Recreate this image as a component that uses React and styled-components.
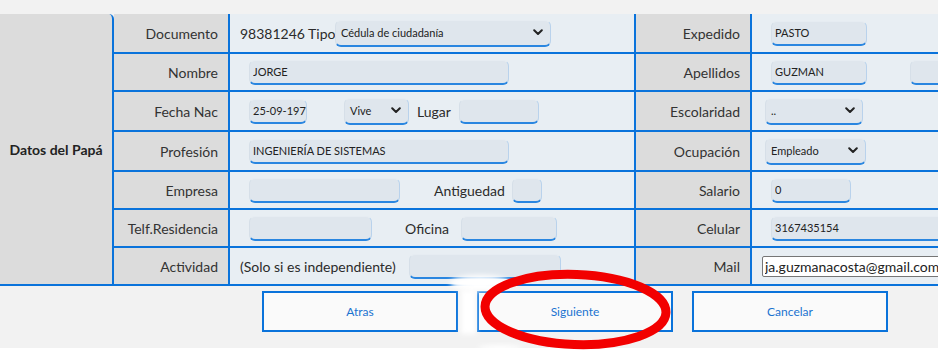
import React from 'react';
import styled, { createGlobalStyle } from 'styled-components';

const BLUE = '#0a73db';

const Global = createGlobalStyle`
  html, body { margin: 0; padding: 0; background: #fff; }
  body { font-family: Lato, "Open Sans", "DejaVu Sans", sans-serif; }
  * { box-sizing: border-box; }
`;

const Page = styled.div`
  position: relative;
  width: 938px;
  height: 360px;
  overflow: hidden;
  background: #fff;
`;

const TopBand = styled.div`
  height: 14px;
  background: #f2f2f2;
`;

const Table = styled.div`
  display: grid;
  grid-template-columns: 114px 116px 406px 116px 1fr;
  grid-template-rows: 40px 38px 40px 40px 38px 38px 38px;
  background: #f2f2f2;
`;

const Cell = styled.div`
  border-bottom: 2px solid ${BLUE};
  border-right: ${(p) => (p.$last ? 'none' : `2px solid ${BLUE}`)};
  display: flex;
  align-items: center;
  overflow: hidden;
  white-space: nowrap;
`;

const Section = styled(Cell)`
  grid-column: 1;
  grid-row: 1 / span 7;
  background: #dcdcdc;
  justify-content: center;
  font-weight: 700;
  font-size: 14px;
  color: #222;
  border-top-right-radius: 5px;
`;

const Label = styled(Cell)`
  background: #dcdcdc;
  justify-content: flex-end;
  padding-right: 10px;
  font-size: 14px;
  color: #333;
`;

const Value = styled(Cell)`
  background: #e8eef3;
  padding-left: ${(p) => p.$pad || 0}px;
`;

const Text = styled.span`
  display: inline-block;
  flex: none;
  width: ${(p) => (p.$w ? `${p.$w}px` : 'auto')};
  margin-left: ${(p) => p.$ml || 0}px;
  font-size: 14px;
  color: #2b2b2b;
`;

const Field = styled.input`
  flex: none;
  width: ${(p) => p.$w}px;
  height: ${(p) => p.$h || 25}px;
  margin-left: ${(p) => p.$ml || 0}px;
  padding: 0 0 0 3px;
  border: none;
  border-top: 1px solid #e6ecf2;
  border-left: 1px solid #d6dfe8;
  border-right: 1px solid #b9d2ec;
  border-bottom: 2px solid #2a86e0;
  border-radius: 6px;
  background: #dfe6ed;
  font-family: Lato, "Open Sans", sans-serif;
  font-size: 11px;
  color: #222;
  outline: none;
`;

const MailField = styled.input`
  flex: none;
  width: 200px;
  height: 21px;
  margin-left: ${(p) => p.$ml || 0}px;
  padding: 0 0 0 2px;
  border: 1px solid #767676;
  border-radius: 2px;
  background: #fff;
  font-family: Lato, "Open Sans", sans-serif;
  font-size: 14px;
  color: #222;
  outline: none;
`;

const SelectBox = styled.div`
  flex: none;
  display: flex;
  align-items: center;
  justify-content: space-between;
  width: ${(p) => p.$w}px;
  height: 27px;
  margin-left: ${(p) => p.$ml || 0}px;
  padding: 0 7px 0 5px;
  border-top: 1px solid #e6ecf2;
  border-left: 1px solid #d6dfe8;
  border-right: 1px solid #b9d2ec;
  border-bottom: 2px solid #2a86e0;
  border-radius: 6px;
  background: #dfe6ed;
  font-size: 11px;
  color: #222;
`;

const Chevron = () => (
  <svg width="10" height="7" viewBox="0 0 10 7">
    <polyline points="1.2,1.2 5,5 8.8,1.2" fill="none" stroke="#222" strokeWidth="2" strokeLinecap="round" strokeLinejoin="round" />
  </svg>
);

const Select = ({ w, ml, children }) => (
  <SelectBox $w={w} $ml={ml}>
    <span>{children}</span>
    <Chevron />
  </SelectBox>
);

const Footer = styled.div`
  height: 62px;
  background: #f2f2f2;
  display: flex;
  padding: 5px 0 0 262px;
  gap: 19px;
`;

const Button = styled.button`
  width: 196px;
  height: 41px;
  border: 2px solid ${BLUE};
  background: #fafafa;
  color: #1a73d0;
  font-family: Lato, "Open Sans", sans-serif;
  font-size: 12px;
  padding: 0;
`;

const Overlay = styled.svg`
  position: absolute;
  left: 0;
  top: 0;
  pointer-events: none;
`;

export default function App() {
  return (
    <Page>
      <Global />
      <TopBand />
      <Table>
        <Section>Datos del Papá</Section>

        <Label>Documento</Label>
        <Value $pad={10}>
          <Text $w={95}>98381246 Tipo</Text>
          <Select w={216}>Cédula de ciudadanía</Select>
        </Value>
        <Label>Expedido</Label>
        <Value $last $pad={19}>
          <Field $w={96} readOnly value="PASTO" />
        </Value>

        <Label>Nombre</Label>
        <Value $pad={19}>
          <Field $w={260} readOnly value="JORGE" />
        </Value>
        <Label>Apellidos</Label>
        <Value $last $pad={19}>
          <Field $w={96} readOnly value="GUZMAN" />
          <Field $w={60} $ml={43} readOnly value="" />
        </Value>

        <Label>Fecha Nac</Label>
        <Value $pad={19}>
          <Field $w={58} readOnly value="25-09-197" />
          <Select w={65} ml={37}>Vive</Select>
          <Text $w={42} $ml={8}>Lugar</Text>
          <Field $w={80} readOnly value="" />
        </Value>
        <Label>Escolaridad</Label>
        <Value $last $pad={13}>
          <Select w={98}>..</Select>
        </Value>

        <Label>Profesión</Label>
        <Value $pad={19}>
          <Field $w={260} readOnly value="INGENIERÍA DE SISTEMAS" />
        </Value>
        <Label>Ocupación</Label>
        <Value $last $pad={13}>
          <Select w={101}>Empleado</Select>
        </Value>

        <Label>Empresa</Label>
        <Value $pad={19}>
          <Field $w={151} readOnly value="" />
          <Text $w={78} $ml={34}>Antiguedad</Text>
          <Field $w={30} readOnly value="" />
        </Value>
        <Label>Salario</Label>
        <Value $last $pad={19}>
          <Field $w={80} readOnly value="0" />
        </Value>

        <Label>Telf.Residencia</Label>
        <Value $pad={19}>
          <Field $w={123} readOnly value="" />
          <Text $w={56} $ml={33}>Oficina</Text>
          <Field $w={96} readOnly value="" />
        </Value>
        <Label>Celular</Label>
        <Value $last $pad={19}>
          <Field $w={200} readOnly value="3167435154" />
        </Value>

        <Label>Actividad</Label>
        <Value $pad={10}>
          <Text $w={169}>(Solo si es independiente)</Text>
          <Field $w={152} readOnly value="" />
        </Value>
        <Label>Mail</Label>
        <Value $last $pad={10}>
          <MailField readOnly value="ja.guzmanacosta@gmail.com" />
        </Value>
      </Table>
      <Footer>
        <Button>Atras</Button>
        <Button>Siguiente</Button>
        <Button>Cancelar</Button>
      </Footer>

      <Overlay width="938" height="360" viewBox="0 0 938 360">
        <defs>
          <filter id="soft" x="-50%" y="-50%" width="200%" height="200%">
            <feGaussianBlur stdDeviation="2.5" />
          </filter>
        </defs>
        <ellipse cx="480" cy="283" rx="30" ry="8" fill="#fff" filter="url(#soft)" />
        <rect x="461" y="290" width="15" height="44" fill="#fff" filter="url(#soft)" />
        <ellipse cx="500" cy="348" rx="22" ry="3" fill="#fff" filter="url(#soft)" />
        <ellipse
          cx="575.5"
          cy="309.5"
          rx="90.5"
          ry="35"
          fill="none"
          stroke="#f20000"
          strokeWidth="9"
          transform="rotate(2 575.5 309.5)"
        />
      </Overlay>
    </Page>
  );
}
